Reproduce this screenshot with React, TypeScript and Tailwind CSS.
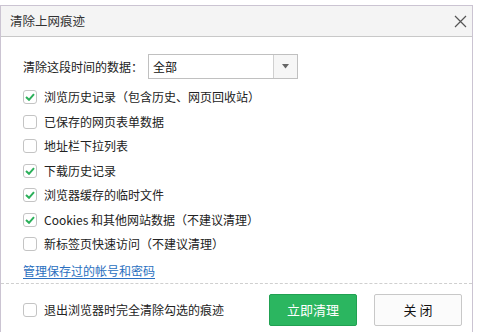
import React from "react";

const font = { fontFamily: '"Microsoft YaHei", "Noto Sans CJK SC", "Noto Sans", sans-serif' };

function Box({ checked }: { checked: boolean }) {
  return (
    <div className="w-[14px] h-[14px] shrink-0 rounded-[3px] border border-[#c4c4c4] bg-white flex items-center justify-center">
      {checked && (
        <svg width="10" height="8" viewBox="0 0 10 8">
          <polyline points="1,4 4,6.8 9,1.2" fill="none" stroke="#2bb05a" strokeWidth="2" />
        </svg>
      )}
    </div>
  );
}

const items: [boolean, string][] = [
  [true, "浏览历史记录（包含历史、网页回收站）"],
  [false, "已保存的网页表单数据"],
  [false, "地址栏下拉列表"],
  [true, "下载历史记录"],
  [true, "浏览器缓存的临时文件"],
  [true, "Cookies 和其他网站数据（不建议清理）"],
  [false, "新标签页快速访问（不建议清理）"],
];

export default function App() {
  return (
    <div className="w-[478px] h-[332px] bg-white pt-[5px] overflow-hidden text-[12px] text-[#222]" style={font}>
      <div className="w-[473px] h-[327px] border border-b-0 border-[#cbc4d2] flex flex-col">
        <div className="h-[31px] shrink-0 bg-[#f4f4f4] border-b border-[#c8c8c8] flex items-center justify-between pl-[9px] pr-[5px]">
          <span className="text-[12.5px] text-[#333] leading-none">清除上网痕迹</span>
          <svg width="13" height="13" viewBox="0 0 13 13">
            <path d="M1 1 L12 12 M12 1 L1 12" stroke="#555" strokeWidth="1.2" />
          </svg>
        </div>
        <div className="pl-[22px] pt-[17px]">
          <div className="flex items-center h-[25px]">
            <span className="w-[125px]">清除这段时间的数据：</span>
            <div className="w-[150px] h-[25px] border border-[#c0c0c0] flex bg-white">
              <div className="flex-1 flex items-center pl-[4px] text-[#111]">全部</div>
              <div className="w-[24px] border-l border-[#d0d0d0] bg-[#f6f6f6] flex items-center justify-center">
                <svg width="7" height="5" viewBox="0 0 7 5">
                  <polygon points="0,0 7,0 3.5,4.5" fill="#666" />
                </svg>
              </div>
            </div>
          </div>
          <div className="mt-[6px]">
            {items.map(([c, t], i) => (
              <div key={i} className="h-[24.5px] flex items-center gap-[7px]">
                <Box checked={c} />
                <span className="leading-none">{t}</span>
              </div>
            ))}
            <div className="h-[24.5px] flex items-center pt-[4px]">
              <span className="text-[#2a6fc0] underline underline-offset-2 leading-none">管理保存过的帐号和密码</span>
            </div>
          </div>
        </div>
        <div className="mt-[2px] border-t border-dashed border-[#cfcfcf]" />
        <div className="flex items-center pl-[22px] pr-[10px] pt-[10px]">
          <div className="flex items-center gap-[7px] flex-1">
            <Box checked={false} />
            <span className="leading-none">退出浏览器时完全清除勾选的痕迹</span>
          </div>
          <div className="flex gap-[17px]">
            <div className="w-[88px] h-[32px] rounded-[2px] bg-[#2bb660] border border-[#21a152] text-white text-[13px] flex items-center justify-center">
              立即清理
            </div>
            <div className="w-[88px] h-[32px] rounded-[2px] bg-[#fbfbfb] border border-[#c8c8c8] text-[#111] text-[13px] flex items-center justify-center">
              关 闭
            </div>
          </div>
        </div>
      </div>
    </div>
  );
}
